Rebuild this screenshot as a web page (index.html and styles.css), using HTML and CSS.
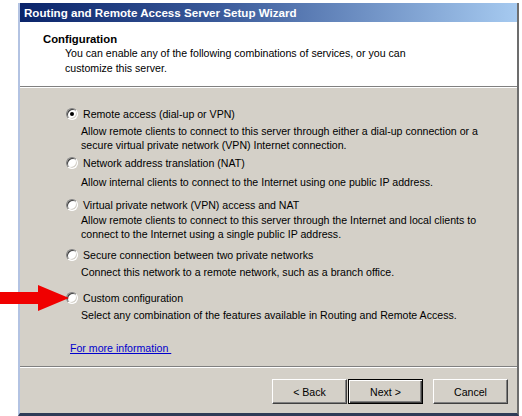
FILE: index.html
```html
<!DOCTYPE html>
<html>
<head>
<meta charset="utf-8">
<link rel="stylesheet" href="styles.css">
</head>
<body>
<div class="window">
  <div class="titlebar">Routing and Remote Access Server Setup Wizard</div>
  <div class="header">
    <div class="h-title">Configuration</div>
    <div class="h-sub">You can enable any of the following combinations of services, or you can<br>customize this server.</div>
  </div>
  <div class="sep"></div>
  <div class="content">
    <div class="opt o1">
      <div class="opt-row"><span class="radio checked"></span><span class="label">Remote access (dial-up or VPN)</span></div>
      <div class="desc">Allow remote clients to connect to this server through either a dial-up connection or a<br>secure virtual private network (VPN) Internet connection.</div>
    </div>
    <div class="opt o2">
      <div class="opt-row"><span class="radio"></span><span class="label">Network address translation (NAT)</span></div>
      <div class="desc d2">Allow internal clients to connect to the Internet using one public IP address.</div>
    </div>
    <div class="opt o3">
      <div class="opt-row"><span class="radio"></span><span class="label">Virtual private network (VPN) access and NAT</span></div>
      <div class="desc d3">Allow remote clients to connect to this server through the Internet and local clients to<br>connect to the Internet using a single public IP address.</div>
    </div>
    <div class="opt o4">
      <div class="opt-row"><span class="radio"></span><span class="label">Secure connection between two private networks</span></div>
      <div class="desc">Connect this network to a remote network, such as a branch office.</div>
    </div>
    <div class="opt o5">
      <div class="opt-row"><span class="radio"></span><span class="label">Custom configuration</span></div>
      <div class="desc">Select any combination of the features available in Routing and Remote Access.</div>
    </div>
    <a class="more" href="#">For more information&nbsp;</a>
  </div>
  <div class="sep"></div>
  <div class="footer">
    <button class="btn">&lt; Back</button>
    <button class="btn default">Next &gt;</button>
    <button class="btn cancel">Cancel</button>
  </div>
</div>
<svg class="arrow" width="72" height="32" viewBox="0 0 72 32">
  <polygon fill="#f00000" points="0,8 38,8 38,1 69,14 38,27 38,20 0,20"/>
</svg>
</body>
</html>
```
FILE: styles.css
```css
html, body {
  margin: 0;
  padding: 0;
  background: #ffffff;
}
body {
  width: 522px;
  height: 416px;
  overflow: hidden;
  position: relative;
  font-family: "Liberation Sans", Arial, sans-serif;
  font-size: 10.6px;
  color: #000;
}
.window {
  margin: 3px 0 0 18px;
  width: 497px;
  height: 410px;
  border-left: 2px solid #b3c3e2;
  border-bottom: 3px solid #2e3b57;
  border-right: 2px solid #6d6d6d;
  background: #d4d0c8;
  display: flex;
  flex-direction: column;
}
.titlebar {
  height: 19px;
  line-height: 19px;
  padding-left: 4px;
  color: #fff;
  font-weight: bold;
  font-size: 11.6px;
  background: linear-gradient(to right, #0a246a 0%, #3a5a9a 40%, #a6caf0 100%);
  white-space: nowrap;
}
.header {
  height: 64px;
  background: #fff;
  padding-left: 23px;
  box-sizing: border-box;
  padding-top: 10px;
}
.h-title {
  font-weight: bold;
  font-size: 11.3px;
  line-height: 14px;
}
.h-sub {
  margin-top: 0;
  padding-left: 22px;
  line-height: 15px;
}
.sep {
  height: 1px;
  border-top: 1px solid #808080;
  background: #fff;
}
.content {
  height: 278px;
  box-sizing: border-box;
  padding: 19px 0 0 46px;
  display: flex;
  flex-direction: column;
  align-items: flex-start;
}
.opt-row {
  display: flex;
  align-items: center;
  height: 14px;
}
.label {
  margin-left: 5px;
  line-height: 14px;
  white-space: nowrap;
}
.desc {
  margin-top: 3px;
  padding-left: 15px;
  line-height: 14px;
  white-space: nowrap;
}
.d2 { margin-top: 5px; }
.d3 { margin-top: 1px; }
.o2 { margin-top: 4px; }
.o3 { margin-top: 9px; }
.o4 { margin-top: 7px; }
.o5 { margin-top: 12px; }
.radio {
  width: 12px;
  height: 12px;
  box-sizing: border-box;
  border-radius: 50%;
  background: #fff;
  border: 1px solid;
  border-color: #808080 #ffffff #ffffff #808080;
  box-shadow: inset 1px 1px 0 #404040, inset -1px -1px 0 #d4d0c8;
  display: flex;
  align-items: center;
  justify-content: center;
  flex: none;
}
.radio.checked::after {
  content: "";
  width: 4px;
  height: 4px;
  border-radius: 50%;
  background: #000;
}
.more {
  margin: 19px 0 0 4px;
  color: #0000cc;
  text-decoration: underline;
  line-height: 14px;
}
.footer {
  flex: 1;
  display: flex;
  justify-content: flex-end;
  align-items: flex-start;
  padding: 11px 9px 0 0;
}
.btn {
  width: 75px;
  height: 25px;
  margin: 0;
  padding: 0;
  font-family: "Liberation Sans", Arial, sans-serif;
  font-size: 10.6px;
  color: #000;
  background: #d4d0c8;
  border: 1px solid;
  border-color: #ffffff #404040 #404040 #ffffff;
  box-shadow: inset -1px -1px 0 #808080;
}
.btn.default {
  margin-left: 1px;
  border: 1px solid #000;
  box-shadow: inset 1px 1px 0 #fff, inset -1px -1px 0 #404040, inset -2px -2px 0 #808080;
}
.btn.cancel {
  margin-left: 10px;
}
.arrow {
  position: absolute;
  left: 0;
  top: 284px;
}
```
